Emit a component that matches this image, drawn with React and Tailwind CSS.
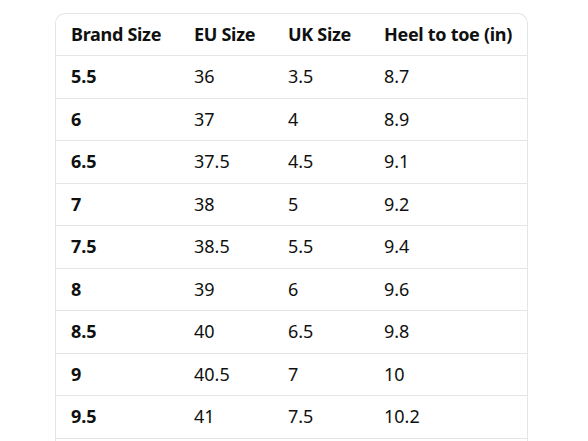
const rows = [
  ['5.5', '36', '3.5', '8.7'],
  ['6', '37', '4', '8.9'],
  ['6.5', '37.5', '4.5', '9.1'],
  ['7', '38', '5', '9.2'],
  ['7.5', '38.5', '5.5', '9.4'],
  ['8', '39', '6', '9.6'],
  ['8.5', '40', '6.5', '9.8'],
  ['9', '40.5', '7', '10'],
  ['9.5', '41', '7.5', '10.2'],
];

function App() {
  return (
    <div className="h-screen overflow-hidden bg-white pt-[13px] pl-[55px] font-['Noto_Sans',sans-serif] text-[18px] text-[#0f1111]">
      <div className="w-[473px] rounded-t-[10px] border border-b-0 border-[#e3e6e6]">
        <div className="grid h-[41px] grid-cols-[122px_94px_96px_1fr] items-center font-bold tracking-[-0.3px]">
          <div className="pl-[15px]">Brand Size</div>
          <div className="pl-4">EU Size</div>
          <div className="pl-4">UK Size</div>
          <div className="pl-4">Heel to toe (in)</div>
        </div>
        {rows.map((r, i) => (
          <div key={i} className="grid h-[42.5px] grid-cols-[122px_94px_96px_1fr] items-center border-t border-[#e3e6e6]">
            <div className="pl-[15px] font-bold">{r[0]}</div>
            <div className="pl-4">{r[1]}</div>
            <div className="pl-4">{r[2]}</div>
            <div className="pl-4">{r[3]}</div>
          </div>
        ))}
        <div className="h-[42.5px] border-t border-[#e3e6e6]" />
      </div>
    </div>
  );
}

export default App;
